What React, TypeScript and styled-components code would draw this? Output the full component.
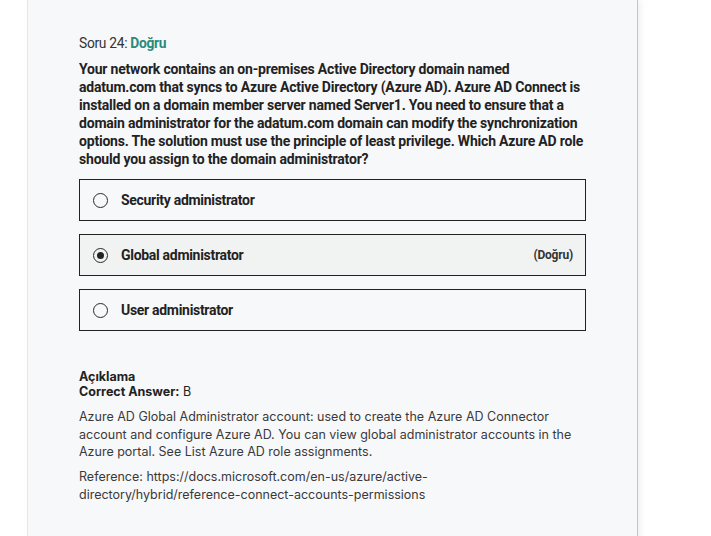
import React from "react";
import styled, { createGlobalStyle } from "styled-components";

const Global = createGlobalStyle`
  html, body { margin: 0; padding: 0; background: #ffffff; }
  body { font-family: Roboto, "Liberation Sans", sans-serif; color: #1f1f1f; }
`;

const Page = styled.div`
  width: 711px;
  height: 536px;
  overflow: hidden;
  display: flex;
  padding-left: 27px;
  box-sizing: border-box;
`;

const Card = styled.div`
  width: 611px;
  min-height: 560px;
  background: #f7f8fa;
  border-left: 1px solid #e6e7ea;
  border-right: 1px solid #c4c4c4;
  box-shadow: 3px 0 6px rgba(0, 0, 0, 0.06);
  padding: 35px 52px 0 51px;
  box-sizing: border-box;
`;

const Title = styled.div`
  font-size: 13.8px;
  letter-spacing: -0.3px;
  color: #333;
  line-height: 16px;
  margin-bottom: 9px;
`;

const Status = styled.span`
  color: #2b8a7b;
  font-weight: 700;
`;

const Question = styled.p`
  margin: 0 0 11px;
  font-size: 14px;
  font-weight: 700;
  letter-spacing: -0.2px;
  line-height: 18px;
  color: #222;
`;

const Options = styled.div`
  display: flex;
  flex-direction: column;
  gap: 13px;
  width: 507px;
`;

const Option = styled.div<{ $selected?: boolean }>`
  display: flex;
  align-items: center;
  height: 42px;
  box-sizing: border-box;
  border: 1px solid #222;
  padding: 0 12px 0 13px;
  background: ${(p) => (p.$selected ? "#f1f3f2" : "transparent")};
`;

const Radio = styled.span<{ $checked?: boolean }>`
  width: 15px;
  height: 15px;
  box-sizing: border-box;
  border-radius: 50%;
  border: 1.3px solid #2a2a2a;
  display: flex;
  align-items: center;
  justify-content: center;
  margin-right: 13px;
  flex: none;
  &::after {
    content: "";
    display: ${(p) => (p.$checked ? "block" : "none")};
    width: 7px;
    height: 7px;
    border-radius: 50%;
    background: #222;
  }
`;

const Label = styled.span`
  flex: 1;
  font-size: 14px;
  font-weight: 700;
  letter-spacing: -0.3px;
  color: #222;
`;

const Tag = styled.span`
  font-size: 12px;
  font-weight: 700;
  letter-spacing: -0.2px;
  color: #333;
`;

const Explanation = styled.div`
  margin-top: 38px;
  color: #333;
  font-family: Inter, Roboto, sans-serif;
`;

const ExHead = styled.div`
  font-size: 12.5px;
  line-height: 15px;
  color: #222;
`;

const Strong = styled.span`
  font-weight: 700;
`;

const ExText = styled.p`
  margin: 7.5px 0 0;
  font-size: 12.5px;
  line-height: 17.5px;
  color: #3a3a3a;
  &:first-of-type {
    margin-top: 9px;
  }
`;

const options = [
  { label: "Security administrator" },
  { label: "Global administrator", selected: true, tag: "(Doğru)" },
  { label: "User administrator" },
];

export default function App() {
  return (
    <>
      <Global />
      <Page>
        <Card>
          <Title>
            Soru 24: <Status>Doğru</Status>
          </Title>
          <Question>
            Your network contains an on-premises Active Directory domain named adatum.com that syncs to Azure
            Active Directory (Azure AD). Azure AD Connect is installed on a domain member server named Server1.
            You need to ensure that a domain administrator for the adatum.com domain can modify the
            synchronization options. The solution must use the principle of least privilege. Which Azure AD
            role should you assign to the domain administrator?
          </Question>
          <Options>
            {options.map((o) => (
              <Option key={o.label} $selected={o.selected}>
                <Radio $checked={o.selected} />
                <Label>{o.label}</Label>
                {o.tag && <Tag>{o.tag}</Tag>}
              </Option>
            ))}
          </Options>
          <Explanation>
            <ExHead>
              <Strong>Açıklama</Strong>
            </ExHead>
            <ExHead>
              <Strong>Correct Answer:</Strong> B
            </ExHead>
            <ExText>
              Azure AD Global Administrator account: used to create the Azure AD Connector account and configure
              Azure AD. You can view global administrator accounts in the Azure portal. See List Azure AD role
              assignments.
            </ExText>
            <ExText>
              Reference: https://docs.microsoft.com/en-us/azure/active-directory/hybrid/reference-connect-accounts-permissions
            </ExText>
          </Explanation>
        </Card>
      </Page>
    </>
  );
}
